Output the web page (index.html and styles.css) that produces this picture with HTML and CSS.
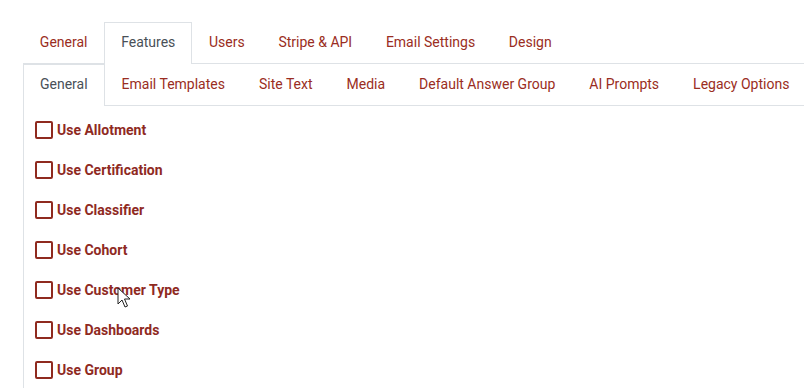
FILE: index.html
```html
<!DOCTYPE html>
<html>
<head>
<meta charset="utf-8">
<link rel="stylesheet" href="styles.css">
</head>
<body>
<div class="page">
  <ul class="tabs">
    <li class="tab">General</li>
    <li class="tab active">Features</li>
    <li class="tab">Users</li>
    <li class="tab">Stripe &amp; API</li>
    <li class="tab">Email Settings</li>
    <li class="tab">Design</li>
  </ul>
  <div class="panel">
    <ul class="tabs sub">
      <li class="tab active">General</li>
      <li class="tab">Email Templates</li>
      <li class="tab">Site Text</li>
      <li class="tab">Media</li>
      <li class="tab">Default Answer Group</li>
      <li class="tab">AI Prompts</li>
      <li class="tab">Legacy Options</li>
    </ul>
    <div class="options">
      <label class="opt"><span class="box"></span>Use Allotment</label>
      <label class="opt"><span class="box"></span>Use Certification</label>
      <label class="opt"><span class="box"></span>Use Classifier</label>
      <label class="opt"><span class="box"></span>Use Cohort</label>
      <label class="opt"><span class="box"></span>Use Customer Type</label>
      <label class="opt"><span class="box"></span>Use Dashboards</label>
      <label class="opt"><span class="box"></span>Use Group</label>
    </div>
  </div>
  <svg class="cursor" width="14" height="22" viewBox="0 0 14 22">
    <path d="M1 1 L1 17 L5 13 L8 20 L10.5 19 L7.5 12 L13 12 Z" fill="#fff" stroke="#222" stroke-width="1" stroke-linejoin="round"/>
  </svg>
</div>
</body>
</html>
```
FILE: styles.css
```css
html, body {
  margin: 0;
  padding: 0;
  background: #fff;
}
.page {
  position: relative;
  padding: 22px 0 0 23px;
  font-family: Roboto, "Liberation Sans", sans-serif;
  font-size: 14px;
  height: 366px;
  overflow: hidden;
}
.tabs {
  list-style: none;
  margin: 0;
  padding: 0;
  display: flex;
  border-bottom: 1px solid #dee2e6;
}
.tab {
  padding: 9px 15.85px 10px;
  line-height: 21px;
  border: 1px solid transparent;
  border-bottom: 0;
  margin-bottom: -1px;
  color: #9a2d22;
  white-space: nowrap;
  background: transparent;
}
.tab.active {
  color: #495057;
  border-color: #dee2e6;
  background: #fff;
  padding-bottom: 11px;
}
.panel {
  border-left: 1px solid #dee2e6;
  height: 400px;
}
.tabs.sub {
  margin-left: -1px;
}
.tabs.sub .tab {
  padding-left: 16px;
  padding-right: 16px;
}
.options {
  display: flex;
  flex-direction: column;
  padding: 4px 0 0 11px;
}
.opt {
  display: flex;
  align-items: center;
  height: 40px;
  font-weight: bold;
  color: #8f2a1f;
  font-size: 14px;
}
.box {
  width: 14px;
  height: 14px;
  border: 2px solid #8f2a1f;
  border-radius: 2px;
  margin-right: 4px;
  flex: none;
}
.cursor {
  position: absolute;
  left: 117px;
  top: 287px;
}
```
